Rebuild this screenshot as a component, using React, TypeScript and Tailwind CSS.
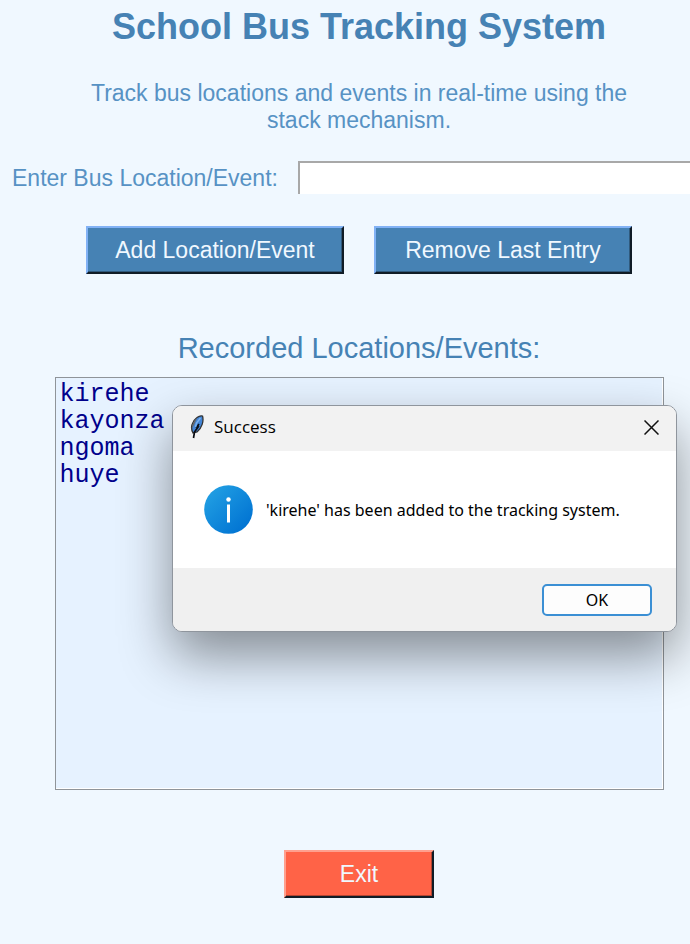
import { useState } from "react";

const entries = ["kirehe", "kayonza", "ngoma", "huye"];

const raised =
  "h-12 border-2 text-[23px] text-[#f0f8ff] border-r-[#101c26] border-b-[#101c26] shadow-[inset_-1px_-1px_0_rgba(0,0,0,0.3)]";

function Feather() {
  return (
    <svg width="16" height="24" viewBox="0 0 16 24" aria-hidden="true">
      <path d="M4 18C1 13 3 6 8 2.500C10 1 12 0.500 13.500 1C15 6 13 13 8 17Z" fill="#4385d6" stroke="#333" strokeWidth="1.300" />
      <path d="M2.500 14C3 9 5 5 8 3L5 10Z" fill="#666" />
      <path d="M10 9L8 12L9 12L5.500 17L4.500 23" fill="none" stroke="#0b0d12" strokeWidth="1.700" />
      <path d="M11.500 3L7.500 8L6.500 12" fill="none" stroke="#78b0ee" strokeWidth="1.500" />
    </svg>
  );
}

function InfoIcon() {
  return (
    <svg width="49" height="49" viewBox="0 0 49 49" className="shrink-0" aria-hidden="true">
      <defs>
        <linearGradient id="info" x1="0" y1="0" x2="1" y2="1">
          <stop offset="0.1" stopColor="#219fe3" />
          <stop offset="0.9" stopColor="#0072d2" />
        </linearGradient>
      </defs>
      <circle cx="24.500" cy="24.500" r="24.300" fill="url(#info)" />
      <circle cx="24.500" cy="14.500" r="2.200" fill="#fff" />
      <rect x="23" y="19.500" width="3" height="18" fill="#fff" />
    </svg>
  );
}

function SuccessDialog({ onClose }: { onClose: () => void }) {
  return (
    <div
      role="dialog"
      aria-labelledby="dialog-title"
      className="absolute top-[405px] left-[172px] w-[505px] overflow-hidden rounded-[10px] border border-[#8f959d] bg-white font-['Noto_Sans','Open_Sans',sans-serif] text-black shadow-[0_24px_52px_rgba(0,0,0,0.42)]"
    >
      <header className="flex h-[45px] items-center bg-[#f2f2f2] px-4 pb-[3px]">
        <Feather />
        <h2 id="dialog-title" className="ml-[9px] flex-1 font-['Open_Sans','Noto_Sans',sans-serif] text-[17px] leading-6">
          Success
        </h2>
        <button type="button" aria-label="Close" onClick={onClose} className="p-px">
          <svg width="15" height="15" viewBox="0 0 15 15" aria-hidden="true">
            <path d="M0.500 0.500L14.500 14.500M14.500 0.500L0.500 14.500" stroke="#111" strokeWidth="1.500" />
          </svg>
        </button>
      </header>
      <div className="flex h-[117px] items-center gap-[13px] pl-[31px]">
        <InfoIcon />
        <p className="text-base whitespace-nowrap">'kirehe' has been added to the tracking system.</p>
      </div>
      <footer className="flex h-[63px] items-center justify-end bg-[#f0f0f0] pr-6">
        <button
          type="button"
          onClick={onClose}
          className="h-8 w-[110px] rounded-[5px] border-2 border-[#3b8fd4] bg-[#fdfdfd] text-base leading-6"
        >
          OK
        </button>
      </footer>
    </div>
  );
}

export default function App() {
  const [open, setOpen] = useState(true);
  return (
    <div className="relative min-h-screen overflow-hidden bg-[#f0f8ff] font-['Liberation_Sans',Arial,sans-serif] text-[#4682b4]">
      <main className="flex flex-col items-center pt-1 pb-10 pl-7">
        <h1 className="text-4xl leading-[46px] font-bold whitespace-nowrap">School Bus Tracking System</h1>
        <p className="mt-[30px] max-w-[560px] text-center text-[23px] leading-[27px] text-[#5792c4]">
          Track bus locations and events in real-time using the stack mechanism.
        </p>
        <div className="mt-[27px] -ml-7 flex items-center gap-5 self-stretch pl-3">
          <label htmlFor="location" className="text-[23px] leading-8 whitespace-nowrap text-[#5792c4]">
            Enter Bus Location/Event:
          </label>
          <input
            id="location"
            type="text"
            className="h-[33px] min-w-0 flex-1 border-t-2 border-l-2 border-[#a8a8a8] bg-white px-1 text-[23px] outline-none"
          />
        </div>
        <div className="mt-8 flex gap-[30px]">
          <button type="button" className={`${raised} w-[258px] border-t-[#82b2f5] border-l-[#82b2f5] bg-[#4682b4]`}>
            Add Location/Event
          </button>
          <button type="button" className={`${raised} w-[258px] border-t-[#82b2f5] border-l-[#82b2f5] bg-[#4682b4]`}>
            Remove Last Entry
          </button>
        </div>
        <h2 className="mt-14 text-[29px] leading-9">Recorded Locations/Events:</h2>
        <ul className="mt-[11px] h-[413px] w-[609px] border border-[#8f9499] bg-[#e6f2ff] px-1 pt-[3px] font-['Liberation_Mono','Courier_New',monospace] text-[25px] leading-[27px] text-[#00008b] shadow-[inset_-1px_-1px_0_#ffffff]">
          {entries.map((entry) => (
            <li key={entry}>{entry}</li>
          ))}
        </ul>
        <button type="button" className={`${raised} mt-[60px] w-[150px] border-t-[#ffa08e] border-l-[#ffa08e] bg-[#ff6347]`}>
          Exit
        </button>
      </main>
      {open && <SuccessDialog onClose={() => setOpen(false)} />}
    </div>
  );
}
